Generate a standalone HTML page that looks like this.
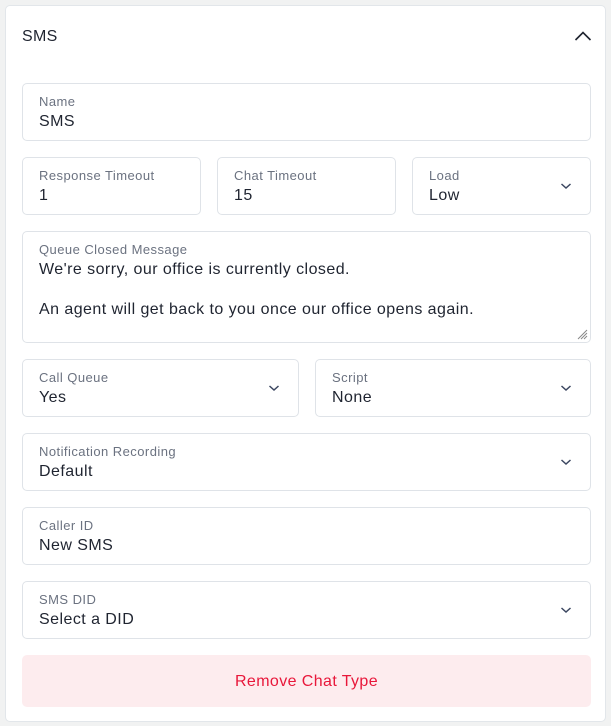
<!DOCTYPE html>
<html><head><style>
*{box-sizing:border-box;margin:0;padding:0}
body{width:611px;height:726px;background:#f1f2f2;font-family:"Liberation Sans",sans-serif;position:relative;overflow:hidden}
.card{position:absolute;left:5px;top:5px;width:601px;height:717px;background:#fff;border:1px solid #e2e6ea;border-radius:5px}
.f{position:absolute;border:1px solid #dfe3e8;border-radius:5px;background:#fff;padding:10px 0 0 16px}
.l{font-size:13px;color:#6b7280;line-height:16px;letter-spacing:0.45px}
.v{font-size:16px;color:#1f2430;line-height:22px;letter-spacing:0.45px;margin-top:1px}
.chev{position:absolute;right:18px;top:24px}
.h{position:absolute;left:22px;top:28px;font-size:16px;color:#1f2430;letter-spacing:0.3px}
.btn{position:absolute;left:22px;top:655px;width:569px;height:52px;background:#fdecee;border-radius:5px;color:#e8173a;font-size:16px;text-align:center;line-height:54px;letter-spacing:0.4px}
</style></head><body>
<div class="card"></div>
<div class="h">SMS</div>
<svg style="position:absolute;left:574px;top:30px" width="18" height="12" viewBox="0 0 18 12"><path d="M1.5 10 L9 2.5 L16.5 10" fill="none" stroke="#1f2430" stroke-width="1.6"/></svg>

<div class="f" style="left:22px;top:83px;width:569px;height:58px"><div class="l">Name</div><div class="v">SMS</div></div>

<div class="f" style="left:22px;top:157px;width:179px;height:58px"><div class="l">Response Timeout</div><div class="v">1</div></div>
<div class="f" style="left:217px;top:157px;width:179px;height:58px"><div class="l">Chat Timeout</div><div class="v">15</div></div>
<div class="f" style="left:412px;top:157px;width:179px;height:58px"><div class="l">Load</div><div class="v">Low</div>
<svg class="chev" width="12" height="8" viewBox="0 0 12 8"><path d="M1.5 2 L6 6 L10.5 2" fill="none" stroke="#3b4660" stroke-width="1.5"/></svg></div>

<div class="f" style="left:22px;top:231px;width:569px;height:112px"><div class="l">Queue Closed Message</div><div class="v" style="line-height:20px;margin-top:2px">We're sorry, our office is currently closed.<br><br>An agent will get back to you once our office opens again.</div>
<svg style="position:absolute;right:2px;bottom:2px" width="12" height="12" viewBox="0 0 12 12"><path d="M11 2 L2 11 M11 5 L5 11 M11 8 L8 11" stroke="#888" stroke-width="1"/></svg></div>

<div class="f" style="left:22px;top:359px;width:277px;height:58px"><div class="l">Call Queue</div><div class="v">Yes</div>
<svg class="chev" width="12" height="8" viewBox="0 0 12 8"><path d="M1.5 2 L6 6 L10.5 2" fill="none" stroke="#3b4660" stroke-width="1.5"/></svg></div>
<div class="f" style="left:315px;top:359px;width:276px;height:58px"><div class="l">Script</div><div class="v">None</div>
<svg class="chev" width="12" height="8" viewBox="0 0 12 8"><path d="M1.5 2 L6 6 L10.5 2" fill="none" stroke="#3b4660" stroke-width="1.5"/></svg></div>

<div class="f" style="left:22px;top:433px;width:569px;height:58px"><div class="l">Notification Recording</div><div class="v">Default</div>
<svg class="chev" width="12" height="8" viewBox="0 0 12 8"><path d="M1.5 2 L6 6 L10.5 2" fill="none" stroke="#3b4660" stroke-width="1.5"/></svg></div>

<div class="f" style="left:22px;top:507px;width:569px;height:58px"><div class="l">Caller ID</div><div class="v">New SMS</div></div>

<div class="f" style="left:22px;top:581px;width:569px;height:58px"><div class="l">SMS DID</div><div class="v">Select a DID</div>
<svg class="chev" width="12" height="8" viewBox="0 0 12 8"><path d="M1.5 2 L6 6 L10.5 2" fill="none" stroke="#3b4660" stroke-width="1.5"/></svg></div>

<div class="btn">Remove Chat Type</div>
</body></html>
